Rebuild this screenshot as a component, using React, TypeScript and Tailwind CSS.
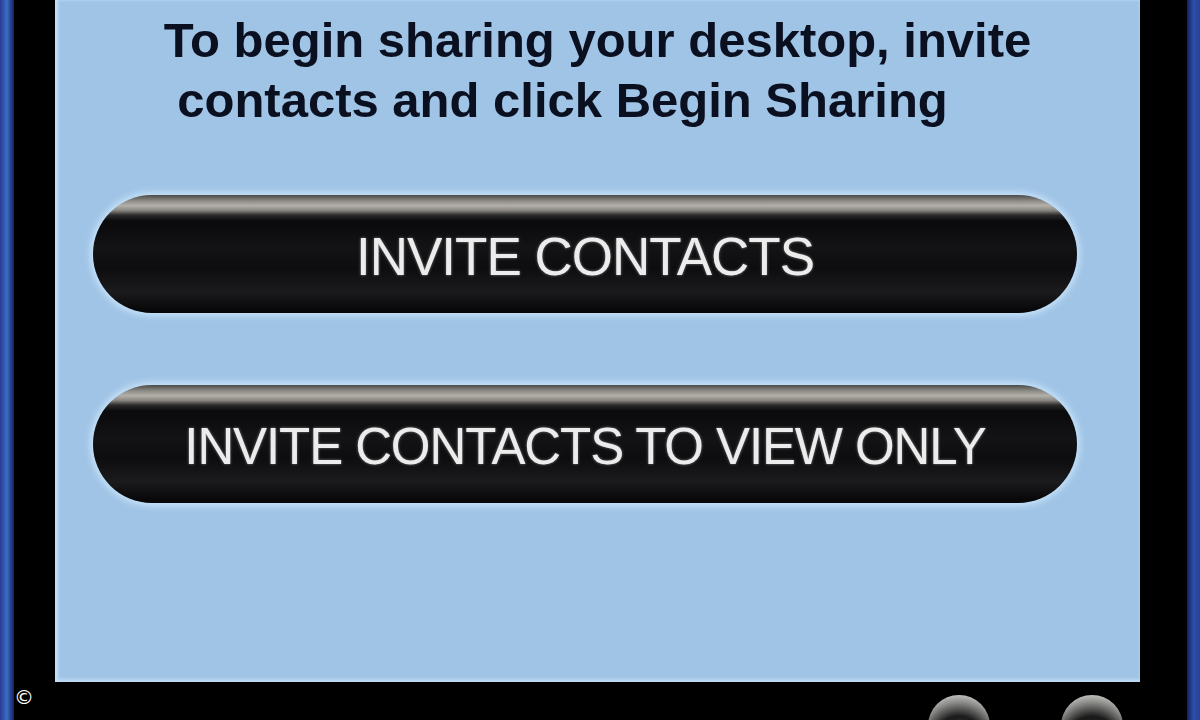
export default function App() {
    const buttonBg =
        "bg-[linear-gradient(to_bottom,#4a4a48_0%,#8d8b86_5%,#b3b0aa_9%,#8a8782_13%,#2c2b2b_17%,#0a0a0c_22%,#131316_45%,#0d0d10_62%,#1b1b1d_82%,#0c0c0e_94%,#050506_100%)]";

    return (
        <div className="w-[1200px] h-[720px] overflow-hidden flex bg-black font-['Liberation_Sans',Arial,sans-serif]">
            <div className="w-[14px] h-full bg-gradient-to-r from-[#2a3b94] via-[#3c6dc4] to-[#142160]" />

            <div className="flex-1 flex flex-col bg-black">
                <div className="flex shrink-0 h-[682px] pl-[41px] pr-[47px]">
                    <div className="flex-1 flex flex-col bg-[#a0c4e6] shadow-[inset_3px_0_3px_#c4e0f8,inset_0_-3px_3px_#bcd9f3]">
                        <div className="pt-[10px] text-[49px] leading-[60px] font-bold text-[#0b1020]">
                            <div className="text-center">To begin sharing your desktop, invite</div>
                            <div className="text-center pr-[70px]">contacts and click Begin Sharing</div>
                        </div>

                        <div className="flex flex-col gap-[72px] mt-[65px] pl-[38px] pr-[63px]">
                            <button
                                className={`h-[118px] w-full rounded-full ${buttonBg} shadow-[0_0_6px_3px_#c6e2f8] flex items-center justify-center pt-[6px] text-[53px] tracking-[-1px] text-[#ececec] [text-shadow:0_0_3px_rgba(255,255,255,0.45)]`}
                            >
                                INVITE CONTACTS
                            </button>
                            <button
                                className={`h-[118px] w-full rounded-full ${buttonBg} shadow-[0_0_6px_3px_#c6e2f8] flex items-center justify-center pt-[6px] text-[51px] tracking-[-1.1px] text-[#ececec] [text-shadow:0_0_3px_rgba(255,255,255,0.45)]`}
                            >
                                INVITE CONTACTS TO VIEW ONLY
                            </button>
                        </div>
                    </div>
                </div>

                <div className="flex-1 min-h-0 overflow-hidden flex items-start">
                    <span className="mt-[3px] text-[20px] leading-[24px] text-white font-['DejaVu_Sans',sans-serif]">©</span>
                    <div className="flex-1" />
                    <div className="flex shrink-0 gap-[71px] mr-[64px] mt-[13px]">
                        <div className="w-[62px] h-[62px] shrink-0 rounded-full bg-[radial-gradient(circle_at_50%_75%,#e0e0e0_0%,#3a3a3a_22%,#1a1a1a_45%,#8a8a88_70%,#c4c4c0_85%,#5a5a58_100%)]" />
                        <div className="w-[62px] h-[62px] shrink-0 rounded-full bg-[radial-gradient(circle_at_50%_75%,#2a2a2a_0%,#1a1a1a_45%,#8a8a88_70%,#c4c4c0_85%,#5a5a58_100%)]" />
                    </div>
                </div>
            </div>

            <div className="w-[13px] h-full bg-gradient-to-r from-[#142160] via-[#2e4ea8] to-[#27409a]" />
        </div>
    );
}
